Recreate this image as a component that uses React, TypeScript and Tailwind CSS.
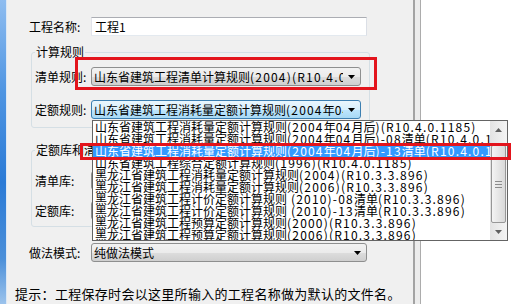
import React from "react";

const listRows = [
  "山东省建筑工程消耗量定额计算规则(2004年04月后)(R10.4.0.1185)",
  "山东省建筑工程消耗量定额计算规则(2004年04月后)-08清单(R10.4.0.1185)",
  "山东省建筑工程消耗量定额计算规则(2004年04月后)-13清单(R10.4.0.1185)",
  "山东省建筑工程综合定额计算规则(1996)(R10.4.0.1185)",
  "黑龙江省建筑工程消耗量定额计算规则(2004)(R10.3.3.896)",
  "黑龙江省建筑工程消耗量定额计算规则(2006)(R10.3.3.896)",
  "黑龙江省建筑工程计价定额计算规则 (2010)-08清单(R10.3.3.896)",
  "黑龙江省建筑工程计价定额计算规则 (2010)-13清单(R10.3.3.896)",
  "黑龙江省建筑工程预算定额计算规则(2000)(R10.3.3.896)",
  "黑龙江省建筑工程预算定额计算规则(2006)(R10.3.3.896)",
];

function T({ s }: { s: string }) {
  const parts = s.split(/([\x20-\x7E]+)/);
  return (
    <>
      {parts.map((p, i) =>
        /^[\x20-\x7E]+$/.test(p) ? (
          <span key={i} className="tracking-[1.2px]">
            {p}
          </span>
        ) : (
          <React.Fragment key={i}>{p}</React.Fragment>
        )
      )}
    </>
  );
}

function Arrow() {
  return (
    <svg width="7" height="4" viewBox="0 0 7 4">
      <path d="M0 0h7L3.5 4z" fill="#000" />
    </svg>
  );
}

function Combo({ text, focused, wide }: { text: string; focused?: boolean; wide?: boolean }) {
  const base = "flex items-center h-[19px] rounded-[3px] border overflow-hidden";
  const size = wide ? "w-[276px]" : "w-[270px]";
  const look = focused
    ? "border-[#3c7fb1] bg-[linear-gradient(#eaf6fd_0%,#d9f0fc_50%,#bee6fd_51%,#a7d9f5_100%)]"
    : "border-[#8e8f8f] bg-[linear-gradient(#f2f2f2_0%,#ebebeb_50%,#dddddd_51%,#cfcfcf_100%)]";
  return (
    <div className={`${base} ${size} ${look}`}>
      <div className="flex-1 overflow-hidden whitespace-nowrap pl-[2px] leading-[17px]">
        <T s={text} />
      </div>
      <div className="w-[17px] flex justify-center items-center">
        <Arrow />
      </div>
    </div>
  );
}

function ScrollArrow({ up }: { up?: boolean }) {
  return (
    <svg width="7" height="4" viewBox="0 0 7 4">
      <path d={up ? "M0 4h7L3.5 0z" : "M0 0h7L3.5 4z"} fill="#606060" />
    </svg>
  );
}

export default function App() {
  return (
    <div className="relative w-[514px] h-[304px] overflow-hidden flex font-['Noto_Sans_CJK_SC','Noto_Sans_CJK_JP',sans-serif] text-[12px] text-black">
      {/* left desktop strip */}
      <div className="w-[7px] h-full border-r border-[#dbe8f6] bg-[linear-gradient(#8fbdf0_0%,#4f95e2_30%,#2a7ad6_60%,#4b8fd9_85%,#9cc3ec_100%)]" />

      {/* dialog panel */}
      <div className="w-[406px] h-full bg-[#f0f0f0] pl-[8px] pt-[17px] leading-[19px]">
        <div className="ml-[14px] flex items-center h-[19px]">
          <span className="w-[62px] whitespace-nowrap">工程名称:</span>
          <div className="w-[276px] h-[19px] bg-white border border-[#abadb3] border-l-[#e2e3ea] border-r-[#dbdfe6] border-b-[#e3e9ef] pl-[3px] leading-[17px]">
            工程1
          </div>
        </div>

        {/* group 1 */}
        <div className="relative ml-[16px] mt-[16px] w-[339px] h-[76px] border border-[#d5dfe5] rounded-[3px] pl-[3px] pt-[14px]">
          <span className="absolute -top-[7px] left-[3px] px-[1px] bg-[#f0f0f0] leading-[12px] whitespace-nowrap">计算规则</span>
          <div className="flex items-center h-[19px]">
            <span className="w-[56px] whitespace-nowrap">清单规则:</span>
            <Combo text="山东省建筑工程清单计算规则(2004)(R10.4.0.1185)" />
          </div>
          <div className="flex items-center h-[19px] mt-[14px]">
            <span className="w-[56px] whitespace-nowrap">定额规则:</span>
            <Combo focused text="山东省建筑工程消耗量定额计算规则(2004年04月后)-13清单(R10.4.0.1185)" />
          </div>
        </div>

        {/* group 2 */}
        <div className="relative ml-[16px] mt-[22px] w-[339px] h-[77px] border border-[#d5dfe5] rounded-[3px] pl-[3px] pt-[20px]">
          <span className="absolute -top-[7px] left-[3px] px-[1px] bg-[#f0f0f0] leading-[12px] whitespace-nowrap">定额库和清单库</span>
          <div className="flex items-center h-[19px]">
            <span className="w-[56px] whitespace-nowrap">清单库:</span>
            <Combo text="山东省建筑工程工程量清单计价规范(2013)" />
          </div>
          <div className="flex items-center h-[19px] mt-[11px]">
            <span className="w-[56px] whitespace-nowrap">定额库:</span>
            <Combo text="山东省建筑工程消耗量定额(2003)" />
          </div>
        </div>

        <div className="ml-[14px] mt-[16px] flex items-center h-[19px]">
          <span className="w-[62px] whitespace-nowrap">做法模式:</span>
          <Combo wide text="纯做法模式" />
        </div>

        <div className="mt-[24px] text-[13px] leading-[16px] tracking-[0.3px] whitespace-nowrap">
          提示：工程保存时会以这里所输入的工程名称做为默认的文件名。
        </div>
      </div>

      {/* right border & next window */}
      <div className="w-[2px] h-full bg-[#a3a3a3]" />
      <div className="w-[5px] h-full bg-[#ececec]" />
      <div className="w-[1px] h-full bg-[#acacac]" />
      <div className="flex-1 h-full bg-white" />

      {/* red highlight around 清单规则 */}
      <div className="absolute left-[75px] top-[57px] w-[302px] h-[33px] border-[3px] border-[#e3141c]" />

      {/* dropdown list popup */}
      <div className="absolute left-[92px] top-[120px] w-[416px] h-[121px] border border-[#646464] bg-white flex">
        <div className="flex-1 overflow-hidden">
          {listRows.map((r, i) => (
            <div
              key={i}
              className={
                i === 2
                  ? "h-[12px] leading-[12px] whitespace-nowrap pl-[2px] bg-[#3399ff] text-white"
                  : "h-[12px] leading-[12px] whitespace-nowrap pl-[2px]"
              }
            >
              <T s={r} />
            </div>
          ))}
        </div>
        <div className="w-[17px] h-full flex flex-col bg-[linear-gradient(90deg,#e3e3e3,#f4f4f4)]">
          <div className="h-[17px] flex items-center justify-center">
            <ScrollArrow up />
          </div>
          <div className="h-[7px]" />
          <div className="h-[78px] mx-[1px] rounded-[2px] border border-[#979797] bg-[linear-gradient(90deg,#f4f4f4,#e6e6e6_50%,#d9d9d9)] flex flex-col items-center justify-center gap-[2px]">
            <div className="w-[7px] h-[1px] bg-[#8c8c8c]" />
            <div className="w-[7px] h-[1px] bg-[#8c8c8c]" />
            <div className="w-[7px] h-[1px] bg-[#8c8c8c]" />
          </div>
          <div className="flex-1 flex items-center justify-center">
            <ScrollArrow />
          </div>
        </div>
      </div>

      {/* red highlight around selected item */}
      <div className="absolute left-[80px] top-[143px] w-[431px] h-[17px] border-[3px] border-[#e3141c]" />
    </div>
  );
}
